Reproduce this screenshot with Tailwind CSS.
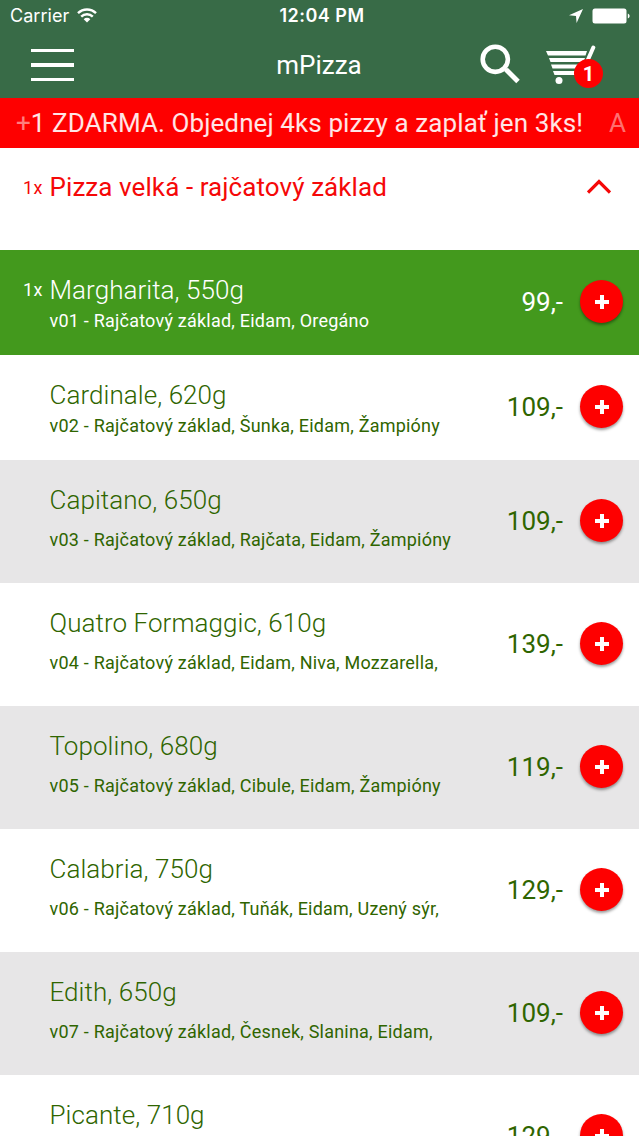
<!DOCTYPE html>
<html lang="cs">
  <head>
    <meta charset="UTF-8" />
    <meta name="viewport" content="width=device-width, initial-scale=1.0" />
    <title>mPizza</title>
    <script src="https://cdn.jsdelivr.net/npm/@tailwindcss/browser@4"></script>
  </head>
  <body class="h-[1136px] overflow-hidden bg-white font-[Roboto,sans-serif]">
    <header class="h-[98px] bg-[#386b47] text-white">
      <!-- Status bar -->
      <div class="grid h-8 grid-cols-3 items-center pl-[10px] pr-[9px] font-[Inter,sans-serif] text-[18px] leading-8">
        <div class="flex items-center gap-2">
          <span class="tracking-[0.05px]">Carrier</span>
          <svg class="-mt-px h-[15px] w-[20px]" viewBox="0 0 20 15" fill="none" stroke="currentColor" stroke-width="2.4">
            <path d="M1 5.2a12.8 12.8 0 0 1 18 0" />
            <path d="M4.2 8.7a8.2 8.2 0 0 1 11.6 0" />
            <path d="M10 14.5 6.7 11.2a4.7 4.7 0 0 1 6.6 0Z" fill="currentColor" stroke="none" />
          </svg>
        </div>
        <span class="pl-1 text-center font-semibold tracking-[0.5px]">12:04 PM</span>
        <div class="flex items-center justify-end gap-[9px]">
          <svg class="h-[14px] w-[14px]" viewBox="0 0 14 14" fill="currentColor">
            <path d="M14 0 7.6 14 7 7 0 6.2Z" />
          </svg>
          <svg class="h-4 w-[38px]" viewBox="0 0 38 16" fill="currentColor">
            <rect x="0.5" y="0.5" width="34" height="15" rx="2.5" />
            <path d="M35.8 5.5c2.4.8 2.4 4.2 0 5Z" />
          </svg>
        </div>
      </div>
      <!-- Navigation -->
      <nav class="grid h-[66px] grid-cols-3 items-center pl-[31px] pr-9">
        <button class="flex w-[43px] flex-col gap-[11px]" aria-label="Menu">
          <span class="h-[3.4px] w-full bg-white"></span>
          <span class="h-[3.4px] w-full bg-white"></span>
          <span class="h-[3.4px] w-full bg-white"></span>
        </button>
        <h1 class="pl-1 text-center text-[26px] leading-[66px]">mPizza</h1>
        <div class="flex items-center justify-end gap-[26px]">
          <svg class="-mt-[3px] h-10 w-10" viewBox="0 0 40 40" fill="none" stroke="currentColor">
            <circle cx="15.3" cy="15.3" r="12.6" stroke-width="4.6" />
            <path d="m26 25.5 12 12" stroke-width="5" />
            <path d="m23.5 23.5 4 4" stroke-width="3" />
          </svg>
          <div class="relative h-10 w-[57px]">
            <svg class="h-10 w-[50px]" viewBox="0 0 50 40" fill="currentColor">
              <path d="M0 6h41l-1.5 4.5H2ZM3 13h36l-1.5 4H4.5ZM5 19.5h32l-1.5 4H6.5ZM7 26h29v4H8.5Z" />
              <path d="m47.3 2.5-11 25" fill="none" stroke="currentColor" stroke-width="4" stroke-linecap="round" />
              <circle cx="13" cy="35.6" r="3.5" />
            </svg>
            <span class="absolute left-[28px] top-[14px] h-[29px] w-[29px] rounded-full bg-[#fe0000] text-center text-[20px] font-bold leading-[31px]">1</span>
          </div>
        </div>
      </nav>
    </header>

    <!-- Running promo text -->
    <div class="flex h-[50px] items-center gap-[26px] overflow-hidden whitespace-nowrap bg-[#fe0000] pl-4 text-[26px] tracking-[0.1px] text-white">
      <span class="text-white/90"><span class="text-white/50">+</span>1 ZDARMA. Objednej 4ks pizzy a zaplať jen 3ks!</span>
      <span class="text-white/45">A</span>
    </div>

    <main>
      <section class="flex h-[102px] items-start pl-[23px] pr-7 pt-5 text-[#f50808]">
        <span class="w-[26.5px] pt-px text-[18px] leading-[38px] tracking-[0.4px]">1x</span>
        <h2 class="flex-1 text-[26px] leading-[38px] tracking-[0.08px]">Pizza velká - rajčatový základ</h2>
        <svg class="mt-[11px] h-[15px] w-[24px]" viewBox="0 0 24 15" fill="none" stroke="currentColor" stroke-width="3.2">
          <path d="M1 13.5 12 2.5l11 11" />
        </svg>
      </section>
      <ul id="menu"></ul>
    </main>

    <script>
      const pizzas = [
        { name: "Margharita, 550g", info: "v01 - Rajčatový základ, Eidam, Oregáno", price: 99, count: 1, short: true },
        { name: "Cardinale, 620g", info: "v02 - Rajčatový základ, Šunka, Eidam, Žampióny", price: 109, short: true },
        { name: "Capitano, 650g", info: "v03 - Rajčatový základ, Rajčata, Eidam, Žampióny", price: 109 },
        { name: "Quatro Formaggic, 610g", info: "v04 - Rajčatový základ, Eidam, Niva, Mozzarella,", price: 139 },
        { name: "Topolino, 680g", info: "v05 - Rajčatový základ, Cibule, Eidam, Žampióny", price: 119 },
        { name: "Calabria, 750g", info: "v06 - Rajčatový základ, Tuňák, Eidam, Uzený sýr,", price: 129 },
        { name: "Edith, 650g", info: "v07 - Rajčatový základ, Česnek, Slanina, Eidam,", price: 109 },
        { name: "Picante, 710g", info: "", price: 129 },
      ];

      function rowColor(pizza, i) {
        if (pizza.count) return "bg-[#43991d] text-white";
        return i % 2 ? "bg-white text-[#2f6500]" : "bg-[#e7e6e7] text-[#2f6500]";
      }

      document.getElementById("menu").innerHTML = pizzas
        .map(
          (pizza, i) => `
          <li class="flex items-center pl-[23px] pr-4 ${pizza.short ? "h-[105px]" : "h-[123px]"} ${rowColor(pizza, i)}">
            <span class="w-[26.5px] self-start pt-[22px] text-[18px] leading-9 tracking-[0.4px]">${pizza.count ? pizza.count + "x" : ""}</span>
            <div class="flex-1 self-start whitespace-nowrap pt-[22px]">
              <h3 class="text-[26px] font-light leading-9 tracking-[0.06px]">${pizza.name}</h3>
              <p class="text-[18px] leading-6 tracking-[0.22px] ${pizza.short ? "pt-px" : "pt-[10px]"}">${pizza.info}</p>
            </div>
            <span class="text-[26px]">${pizza.price},-</span>
            <button class="-mt-[2px] ml-[17px] flex h-[43px] w-[43px] items-center justify-center rounded-full bg-[#fe0000] shadow-[0_2px_3px_rgba(0,0,0,0.4)]" aria-label="+">
              <svg class="mt-px h-[14px] w-[14px]" viewBox="0 0 14 14" stroke="#fff" stroke-width="4">
                <path d="M7 0v14M0 7h14" />
              </svg>
            </button>
          </li>`
        )
        .join("");
    </script>
  </body>
</html>
